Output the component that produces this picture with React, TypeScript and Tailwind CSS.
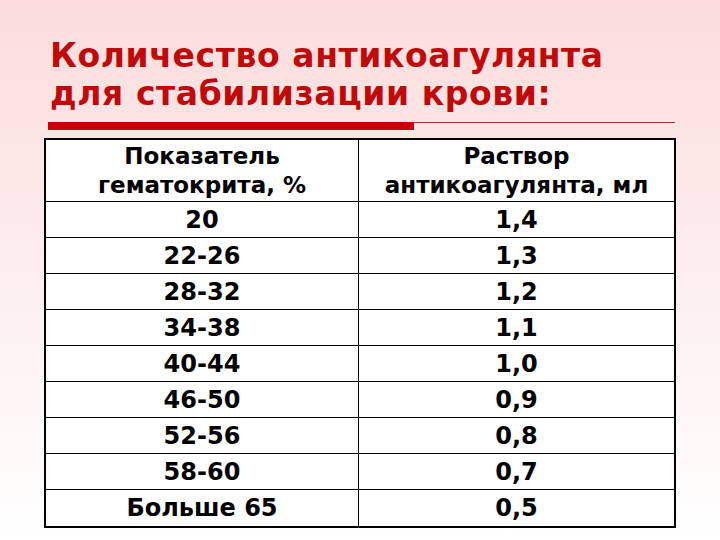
import React from 'react'

const rows: [string, string][] = [
    ['20', '1,4'],
    ['22-26', '1,3'],
    ['28-32', '1,2'],
    ['34-38', '1,1'],
    ['40-44', '1,0'],
    ['46-50', '0,9'],
    ['52-56', '0,8'],
    ['58-60', '0,7'],
    ['Больше 65', '0,5'],
]

export default function App() {
    return (
        <div
            className="w-[720px] h-[540px] overflow-hidden flex flex-col bg-gradient-to-b from-[#fcdcdc] via-[#fdeeee] to-[#ffffff]"
            style={{ fontFamily: "'DejaVu Sans', Verdana, sans-serif" }}
        >
            <h1 className="pl-[50px] pt-[37px] text-[33px] leading-[38px] font-bold tracking-[0.6px] text-[#c00a0a]">
                Количество антикоагулянта
                <br />
                для стабилизации крови:
            </h1>

            <div className="flex items-start ml-[48px] mr-[45px] mt-[9px]">
                <div className="w-[366px] h-[8px] bg-[#c8000a]" />
                <div className="flex-1 border-t border-[#b03030]" />
            </div>

            <div className="ml-[44px] w-[632px] mt-[8px] border-[2px] border-black bg-white">
                <div className="grid grid-cols-[313px_1fr] h-[62px] border-b border-black text-black font-bold text-[23px] leading-[29px] text-center">
                    <div className="border-r border-black flex flex-col justify-center">
                        <span>Показатель</span>
                        <span>гематокрита, %</span>
                    </div>
                    <div className="flex flex-col justify-center">
                        <span>Раствор</span>
                        <span>антикоагулянта, мл</span>
                    </div>
                </div>
                {rows.map(([a, b], i) => (
                    <div
                        key={i}
                        className={
                            'grid grid-cols-[313px_1fr] h-[36px] text-black font-bold text-[24px] text-center' +
                            (i < rows.length - 1 ? ' border-b border-black' : '')
                        }
                    >
                        <div className="border-r border-black flex items-center justify-center">{a}</div>
                        <div className="flex items-center justify-center">{b}</div>
                    </div>
                ))}
            </div>
        </div>
    )
}
